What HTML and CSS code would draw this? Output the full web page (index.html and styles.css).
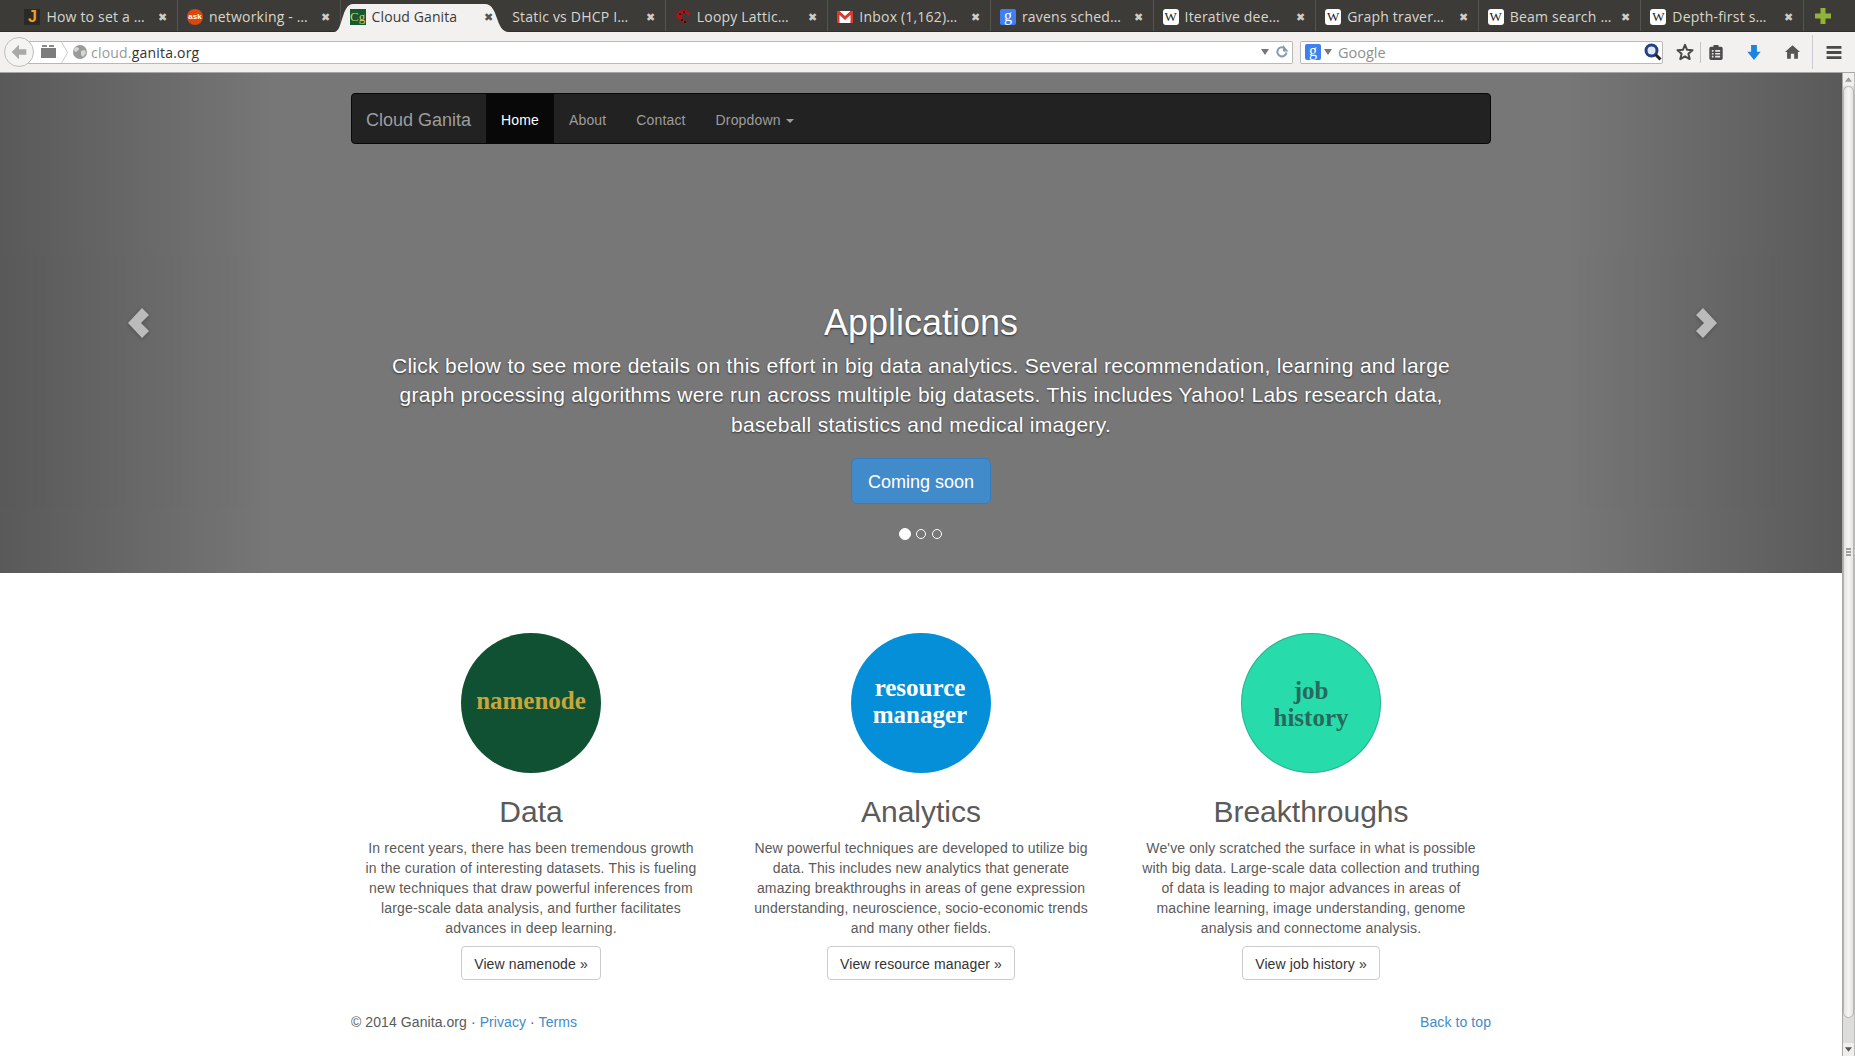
FILE: index.html
```html
<!DOCTYPE html>
<html lang="en">
<head>
<meta charset="utf-8">
<title>Cloud Ganita</title>
<link rel="stylesheet" href="styles.css">
</head>
<body>
<div class="tabstrip">
  <div class="tab"><span class="fav fav-j">J</span><span class="tab-title">How to set a …</span><span class="tab-x">✖</span></div>
  <div class="tab"><span class="fav fav-ask">ask</span><span class="tab-title">networking - …</span><span class="tab-x">✖</span></div>
  <div class="tab tab-active">
    <svg class="tab-shape" viewBox="0 0 174 28" preserveAspectRatio="none"><path d="M0 28 C9 28 7 0 19 0 L150 0 C164 0 160 28 174 28 Z" fill="#f2f1ef"/></svg>
    <span class="fav fav-cg">Cg</span><span class="tab-title">Cloud Ganita</span><span class="tab-x">✖</span></div>
  <div class="tab tab-nosep"><span class="tab-title">Static vs DHCP I…</span><span class="tab-x">✖</span></div>
  <div class="tab"><svg class="fav" viewBox="0 0 16 16"><path d="M1 7 C2 3 5 1 9 1 C12 1 15 3 15 6 L13 7 C12 4 10 3 8 4 C6 5 6 7 7 9 L9 10 L12 15 L8 14 L5 11 L3 9 Z" fill="#b01218"/><path d="M4 4h2v2h-2zM8 2h2v2h-2zM6 10h2v2h-2zM9 12h2v2h-2z" fill="#2a0a0a"/></svg><span class="tab-title">Loopy Lattic…</span><span class="tab-x">✖</span></div>
  <div class="tab"><svg class="fav" viewBox="0 0 16 16"><rect y="2" width="16" height="12" fill="#fff"/><path d="M0 2h2.500L8 7l5.500-5H16v12h-2.500V6L8 11 2.500 6v8H0z" fill="#d93a30"/></svg><span class="tab-title">Inbox (1,162)…</span><span class="tab-x">✖</span></div>
  <div class="tab"><span class="fav fav-g">g</span><span class="tab-title">ravens sched…</span><span class="tab-x">✖</span></div>
  <div class="tab"><span class="fav fav-w">W</span><span class="tab-title">Iterative dee…</span><span class="tab-x">✖</span></div>
  <div class="tab"><span class="fav fav-w">W</span><span class="tab-title">Graph traver…</span><span class="tab-x">✖</span></div>
  <div class="tab"><span class="fav fav-w">W</span><span class="tab-title">Beam search …</span><span class="tab-x">✖</span></div>
  <div class="tab"><span class="fav fav-w">W</span><span class="tab-title">Depth-first s…</span><span class="tab-x">✖</span></div>
  <svg class="newtab" viewBox="0 0 16 16"><path d="M5.500 0h5v5.500H16v5h-5.500V16h-5v-5.500H0v-5h5.500z" fill="#8fb33a"/></svg>
</div>

<div class="toolbar">
  <div class="backbtn"><svg viewBox="0 0 16 16"><path d="M8 1.500 1.500 8 8 14.500V10.500h6.500v-5H8z" fill="#a9a9a6"/></svg></div>
  <div class="urlbar">
    <svg class="ico-folder" viewBox="0 0 15 14"><path d="M1 0h5v2H1zM8 0h5v2H8z" fill="#8a8a88"/><rect y="3" width="15" height="10" fill="#7c7c7a"/></svg>
    <svg class="ident-arrow" viewBox="0 0 8 24"><path d="M0 0 7 12 0 24" fill="none" stroke="#c4c4c2"/></svg>
    <svg class="ico-globe" viewBox="0 0 14 14"><circle cx="7" cy="7" r="7" fill="#9a9a98"/><path d="M3 2c2 0 3 1 3 2S4 6 3 7 1 5 1 4zM8 6l4-1 1 3-3 4-2-2z" fill="#d6d6d4"/></svg>
    <span class="url"><span class="url-dim">cloud.</span>ganita.org</span>
    <svg class="ico-drop" viewBox="0 0 8 6"><path d="M0 0h8L4 6z" fill="#777"/></svg>
    <svg class="ico-reload" viewBox="0 0 14 14"><path d="M11.500 7.500A4.600 4.600 0 1 1 9.500 3" fill="none" stroke="#8a9bb0" stroke-width="2"/><path d="M8 0v6.500h5.500z" fill="#8a9bb0"/></svg>
  </div>
  <div class="searchbar">
    <span class="fav fav-g">g</span>
    <svg class="ico-drop" viewBox="0 0 8 6"><path d="M0 0h8L4 6z" fill="#777"/></svg>
    <span class="search-ph">Google</span>
    <svg class="ico-mag" viewBox="0 0 18 18"><circle cx="7.500" cy="7.500" r="5.500" fill="#dfe8f5" stroke="#233f86" stroke-width="3"/><path d="M11.500 11.500 16.500 16.500" stroke="#222" stroke-width="3"/></svg>
  </div>
  <svg class="tool ico-star" viewBox="0 0 18 18"><path d="M9 1.800 11.100 6.800 16.500 7.200 12.400 10.800 13.700 16.100 9 13.300 4.300 16.100 5.600 10.800 1.500 7.200 6.900 6.800Z" fill="none" stroke="#484848" stroke-width="2" stroke-linejoin="round"/></svg>
  <span class="tool-sep"></span>
  <svg class="tool ico-clip" viewBox="0 0 16 18"><path d="M5 0h6v2h3a2 2 0 0 1 2 2v12a2 2 0 0 1-2 2H2a2 2 0 0 1-2-2V4a2 2 0 0 1 2-2h3z" fill="#4a4a4a"/><path d="M3 6h2v2H3zM7 6h6v2H7zM3 9.500h2v2H3zM7 9.500h6v2H7zM3 13h2v2H3zM7 13h6v2H7z" fill="#e6e6e4"/></svg>
  <svg class="tool ico-down" viewBox="0 0 16 18"><path d="M4.500 0h7v8H16l-8 10L0 8h4.500z" fill="#1c84e0"/></svg>
  <svg class="tool ico-home" viewBox="0 0 18 16"><path d="M9 0 18 8H15.500V16H11V10H7V16H2.500V8H0Z" fill="#555"/></svg>
  <span class="tool-sep tool-sep-tall"></span>
  <svg class="tool ico-menu" viewBox="0 0 16 14"><path d="M0 0h16v3H0zM0 5.500h16v3H0zM0 11h16v3H0z" fill="#4a4a4a"/></svg>
</div>

<div class="viewport">
  <div class="page">
    <section class="carousel">
      <nav class="navbar">
        <a class="brand">Cloud Ganita</a>
        <a class="nav-link nav-active">Home</a>
        <a class="nav-link">About</a>
        <a class="nav-link">Contact</a>
        <a class="nav-link">Dropdown <span class="caret"></span></a>
      </nav>
      <div class="caption">
        <h1>Applications</h1>
        <p class="lead">Click below to see more details on this effort in big data analytics. Several recommendation, learning and large graph processing algorithms were run across multiple big datasets. This includes Yahoo! Labs research data, baseball statistics and medical imagery.</p>
        <a class="btn-primary">Coming soon</a>
      </div>
      <div class="indicators"><span class="dot dot-active"></span><span class="dot"></span><span class="dot"></span></div>
      <div class="control control-left"><svg viewBox="0 0 21 30"><path d="M0 15 14 0 21 7 13 15 21 23 14 30Z" fill="#fff"/></svg></div>
      <div class="control control-right"><svg viewBox="0 0 21 30"><path d="M21 15 7 0 0 7 8 15 0 23 7 30Z" fill="#fff"/></svg></div>
    </section>

    <main class="marketing">
      <div class="cols">
        <article class="col col-tight">
          <div class="circle circle-name"><span>namenode</span></div>
          <h2>Data</h2>
          <p>In recent years, there has been tremendous growth in the curation of interesting datasets. This is fueling new techniques that draw powerful inferences from large-scale data analysis, and further facilitates advances in deep learning.</p>
          <a class="btn-default">View namenode »</a>
        </article>
        <article class="col">
          <div class="circle circle-res"><span>resource<br>manager</span></div>
          <h2>Analytics</h2>
          <p>New powerful techniques are developed to utilize big data. This includes new analytics that generate amazing breakthroughs in areas of gene expression understanding, neuroscience, socio-economic trends and many other fields.</p>
          <a class="btn-default">View resource manager »</a>
        </article>
        <article class="col">
          <div class="circle circle-job"><span>job<br>history</span></div>
          <h2>Breakthroughs</h2>
          <p>We've only scratched the surface in what is possible with big data. Large-scale data collection and truthing of data is leading to major advances in areas of machine learning, image understanding, genome analysis and connectome analysis.</p>
          <a class="btn-default">View job history »</a>
        </article>
      </div>
      <footer class="footer">
        <span>© 2014 Ganita.org · <a>Privacy</a> · <a>Terms</a></span>
        <a>Back to top</a>
      </footer>
    </main>
  </div>
  <div class="scrollbar">
    <div class="sb-btn"><svg viewBox="0 0 8 5"><path d="M4 0l4 5H0z" fill="#9a9a98"/></svg></div>
    <div class="sb-thumb"><span class="grip"></span><span class="grip"></span><span class="grip"></span></div>
    <div class="sb-track"></div>
    <div class="sb-btn"><svg viewBox="0 0 8 5"><path d="M4 5l4-5H0z" fill="#555"/></svg></div>
  </div>
</div>
</body>
</html>
```

FILE: styles.css
```css
* { box-sizing: border-box; }
html, body { margin: 0; height: 100%; overflow: hidden; }
body { display: flex; flex-direction: column; font-family: "Liberation Sans", Arial, sans-serif; font-size: 14px; line-height: 20px; color: #5a5a5a; background: #fff; }
a { color: #428bca; text-decoration: none; }

.tabstrip { height: 32px; flex: none; background: #3c3b37; display: flex; padding-left: 15.4px; border-bottom: 1px solid #2f2e2b; font-family: "Open Sans", "Noto Sans", sans-serif; font-size: 14px; letter-spacing: .2px; color: #d9d6cd; }
.tab { position: relative; width: 162.6px; display: flex; align-items: center; padding: 2px 8.5px 0 9px; border-right: 1px solid #55544f; }
.tab-active { border-right: none; color: #3c3b37; letter-spacing: .1px; }
.tab-shape { position: absolute; left: -7px; top: 4px; width: 175px; height: 28px; }
.tab-active > .fav, .tab-active > .tab-title, .tab-active > .tab-x { position: relative; }
.tab-title { flex: 1; margin-left: 6px; white-space: nowrap; overflow: hidden; }
.tab-nosep .tab-title { margin-left: 0; }
.tab-x { font-size: 11px; color: #cfcdc5; width: 12px; text-align: center; letter-spacing: 0; }
.tab-active .tab-x { color: #55544f; }
.fav { width: 16px; height: 16px; flex: none; display: block; text-align: center; letter-spacing: 0; }
.fav-j { background: #2a2926; color: #f0a020; font: bold 16px/16px "Liberation Sans", sans-serif; }
.fav-ask { background: #d9480f; color: #fff; border-radius: 50%; font: bold 8px/16px "Liberation Sans", sans-serif; }
.fav-cg { background: #155a2e; color: #d9c66b; font: 13px/16px "Liberation Serif", serif; }
.fav-g { background: #3f7ff0; color: #fff; border-radius: 2px; font: 16px/13px "Liberation Serif", serif; }
.fav-w { background: #fff; color: #222; border-radius: 3px; font: 13px/16px "Liberation Serif", serif; }
.newtab { width: 16px; height: 16px; margin: 8px 0 0 11px; flex: none; }

.toolbar { height: 41px; flex: none; background: #f2f1ef; border-bottom: 1px solid #a6a6a3; display: flex; align-items: center; padding: 0 14px 0 4px; font-family: "Open Sans", "Noto Sans", sans-serif; font-size: 14px; }
.backbtn { width: 30px; height: 30px; border-radius: 50%; border: 1px solid #bdbdba; background: #f4f4f2; display: flex; align-items: center; justify-content: center; flex: none; z-index: 1; }
.backbtn svg { width: 18px; height: 18px; }
.urlbar { flex: none; width: 1268px; margin-left: -9px; height: 23px; background: #fff; border: 1px solid #b9b9b6; border-left: none; display: flex; align-items: center; padding-left: 16px; border-radius: 0 2px 2px 0; color: #333; }
.ico-folder { width: 15px; height: 14px; flex: none; }
.ident-arrow { width: 8px; height: 21px; margin-left: 5px; flex: none; }
.ico-globe { width: 14px; height: 14px; margin-left: 4px; flex: none; }
.url { margin-left: 4px; padding-top: 2px; flex: 1; font-size: 14px; letter-spacing: .2px; }
.url-dim { color: #999; }
.ico-drop { width: 8px; height: 6px; flex: none; }
.ico-reload { width: 14px; height: 14px; margin: 0 3px 0 6px; flex: none; }
.searchbar { flex: none; width: 363px; margin-left: 7px; height: 23px; background: #fff; border: 1px solid #b9b9b6; border-radius: 2px; display: flex; align-items: center; padding-left: 4px; }
.searchbar .ico-drop { margin-left: 3px; }
.search-ph { flex: 1; margin-left: 6px; padding-top: 2px; color: #8f8f8f; font-size: 14.500px; }
.ico-mag { width: 18px; height: 18px; flex: none; }
.tool { flex: none; }
.ico-star { width: 18px; height: 18px; margin-left: 13px; }
.tool-sep { width: 1px; height: 21px; background: #c3c3c0; margin-left: 6px; flex: none; }
.tool-sep-tall { height: 34px; margin-left: 12.500px; background: #c8ccd2; }
.ico-clip { width: 14px; height: 15px; margin-left: 7.500px; }
.ico-down { width: 14px; height: 15px; margin-left: 24px; }
.ico-home { width: 15px; height: 14px; margin-left: 24px; }
.ico-menu { width: 16px; height: 13px; margin-left: 13px; }

.viewport { flex: 1; display: flex; min-height: 0; }
.page { flex: 1; min-width: 0; overflow: hidden; }
.scrollbar { width: 13px; flex: none; background: #dcdcda; border-left: 1px solid #a9a9a7; border-right: 1px solid #bdbdbb; display: flex; flex-direction: column; }
.sb-btn { height: 13px; background: #f0efed; display: flex; align-items: center; justify-content: center; flex: none; }
.sb-btn svg { width: 7px; height: 5px; }
.sb-thumb { height: 932px; flex: none; background: linear-gradient(to right, #e4e3e1, #f6f5f3 50%, #e4e3e1); border: 1px solid #b5b5b3; border-radius: 6px; display: flex; flex-direction: column; align-items: center; justify-content: center; gap: 1px; }
.grip { display: block; width: 5px; height: 2px; background: #9e9e9c; }
.sb-track { flex: 1; }

.carousel { position: relative; height: 500px; background: #777; margin-bottom: 60px; display: flex; flex-direction: column; align-items: center; }
.navbar { position: relative; z-index: 2; width: 1140px; height: 51px; margin-top: 20px; background: #222; border: 1px solid #080808; border-radius: 4px; display: flex; flex: none; }
.navbar a { color: #9d9d9d; padding: 16px 15px 14px; line-height: 20px; }
.navbar .brand { font-size: 18px; width: 134px; padding-left: 14px; white-space: nowrap; }
.navbar .nav-link { letter-spacing: .15px; }
.navbar .nav-active { color: #fff; background: #080808; }
.caret { display: inline-block; width: 0; height: 0; margin-left: 1px; vertical-align: middle; border-top: 4px solid #9d9d9d; border-left: 4px solid transparent; border-right: 4px solid transparent; }

.caption { position: relative; z-index: 2; margin-top: 159px; width: 1100px; text-align: center; color: #fff; text-shadow: 0 1px 2px rgba(0,0,0,.6); }
.caption h1 { margin: 0; font-size: 36px; font-weight: 500; line-height: 40px; }
.lead { margin: 8px 0 19px; font-size: 21px; line-height: 29.400px; letter-spacing: .29px; }
.btn-primary { display: inline-block; height: 46px; padding: 11px 16px 9px; font-size: 18px; line-height: 24px; color: #fff; background: #428bca; border: 1px solid #357ebd; border-radius: 6px; text-shadow: none; }

.indicators { position: absolute; z-index: 3; left: 0; right: 0; top: 455px; padding-right: 2px; display: flex; justify-content: center; align-items: center; gap: 6px; }
.dot { width: 10px; height: 10px; border: 1px solid #fff; border-radius: 50%; }
.dot-active { width: 12px; height: 12px; background: #fff; margin-right: -1px; }

.control { position: absolute; top: 0; bottom: 0; width: 15%; opacity: .5; display: flex; align-items: center; justify-content: center; z-index: 1; }
.control svg { width: 21px; height: 30px; margin-top: -1px; filter: drop-shadow(0 1px 2px rgba(0,0,0,.6)); }
.control-left { left: 0; background: linear-gradient(to right, rgba(0,0,0,.5), rgba(0,0,0,.0001)); }
.control-right { right: 0; background: linear-gradient(to right, rgba(0,0,0,.0001), rgba(0,0,0,.5)); }
.control-right svg { margin-left: 6px; }

.marketing { width: 1170px; margin: 0 auto; padding: 0 15px; }
.cols { display: flex; margin: 0 -15px; }
.col { width: 390px; padding: 0 15px; margin-bottom: 32px; text-align: center; display: flex; flex-direction: column; align-items: center; }
.col h2 { margin: 22px 0 10px; font-size: 30px; font-weight: 400; line-height: 33px; }
.col p { margin: 0 10px 8px; letter-spacing: .12px; }
.col-tight p { margin: 0 12px 8px; letter-spacing: .16px; }
.circle { width: 140px; height: 140px; border-radius: 50%; flex: none; display: flex; align-items: center; justify-content: center; font-family: "Liberation Serif", serif; font-weight: 700; font-size: 25px; line-height: 27px; }
.circle-name { background: #0f5132; color: #c9a63c; padding-bottom: 5px; }
.circle-res { background: #058fd8; color: #fff; padding: 0 2px 4px 0; }
.circle-job { background: #28dbab; color: #27695c; padding-top: 1px; box-shadow: inset 0 0 0 1px rgba(39,105,92,.35); }
.btn-default { display: block; height: 34px; padding: 7px 12px 5px; color: #333; background: #fff; border: 1px solid #ccc; border-radius: 4px; white-space: nowrap; letter-spacing: .12px; }
.footer { display: flex; justify-content: space-between; letter-spacing: .08px; }
```
